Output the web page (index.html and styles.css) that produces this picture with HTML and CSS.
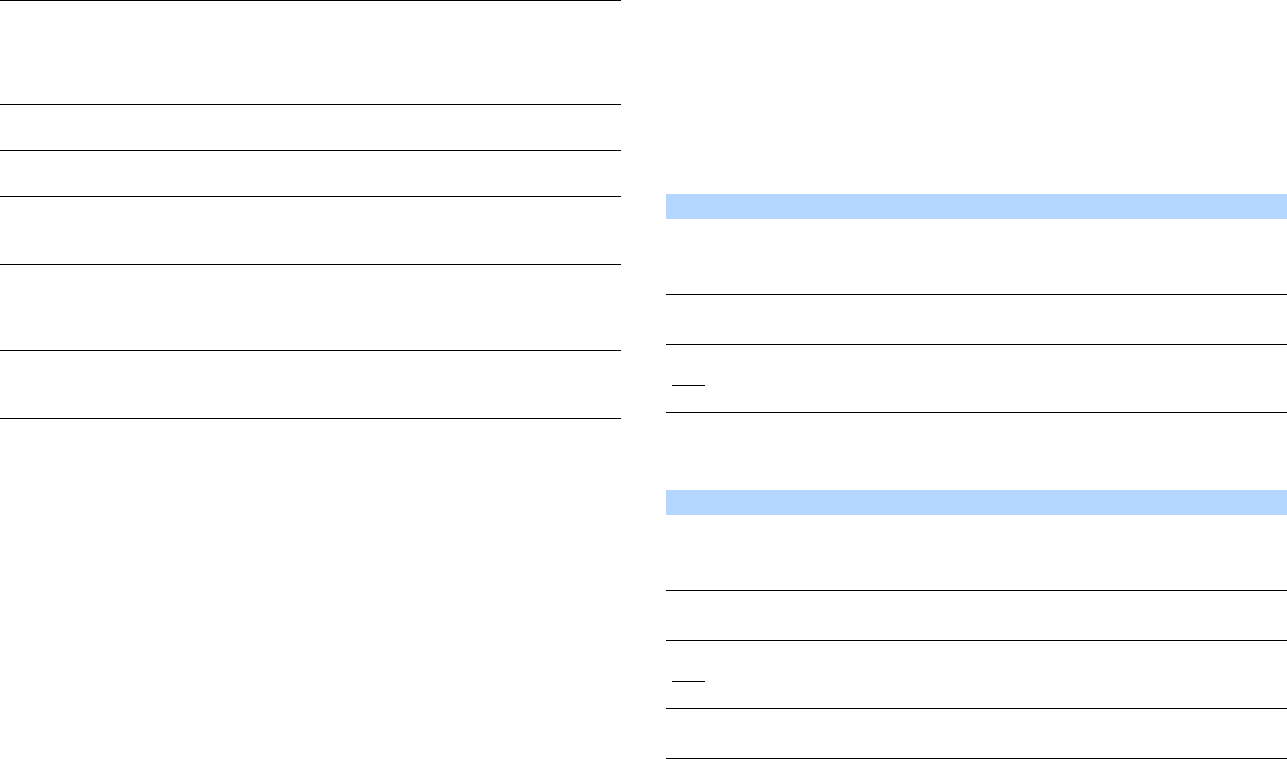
FILE: index.html
```html
<!DOCTYPE html>
<html lang="en">
<head>
<meta charset="utf-8">
<title>Tables</title>
<link rel="stylesheet" href="styles.css">
</head>
<body>
<div class="page">
  <section class="col col-left">
    <div class="row row-a"></div>
    <div class="row row-b"></div>
    <div class="row row-b"></div>
    <div class="row row-c"></div>
    <div class="row row-d"></div>
    <div class="row row-c"></div>
  </section>
  <section class="col col-right">
    <div class="table table-first">
      <div class="thead"></div>
      <div class="row row-e"></div>
      <div class="row row-f"></div>
      <div class="row row-c row-link"><span class="link"></span></div>
    </div>
    <div class="table table-second">
      <div class="thead"></div>
      <div class="row row-e"></div>
      <div class="row row-f"></div>
      <div class="row row-c row-link"><span class="link"></span></div>
      <div class="row row-f"></div>
    </div>
  </section>
</div>
</body>
</html>
```

FILE: styles.css
```css
html, body {
  margin: 0;
  padding: 0;
  background: #ffffff;
  font-family: "Liberation Sans", Arial, sans-serif;
  overflow: hidden;
}

.page {
  display: flex;
  gap: 45px;
  width: 1287px;
  height: 759px;
}

.col {
  width: 621px;
  flex: none;
  display: flex;
  flex-direction: column;
}

.col-left {
  border-top: 1px solid #000;
}

.col-right {
  padding-top: 194px;
}

.table-second {
  margin-top: 77px;
}

.thead {
  height: 25px;
  background: #b3d7ff;
}

.row {
  border-bottom: 1px solid #000;
  box-sizing: content-box;
}

.row-a { height: 103px; }
.row-b { height: 45px; }
.row-c { height: 67px; }
.row-d { height: 85px; }
.row-e { height: 75px; }
.row-f { height: 49px; }

.row-link {
  height: 27px;
  padding: 40px 0 0 6px;
}

.link {
  display: block;
  width: 33px;
  border-bottom: 1px solid #000;
}
```
